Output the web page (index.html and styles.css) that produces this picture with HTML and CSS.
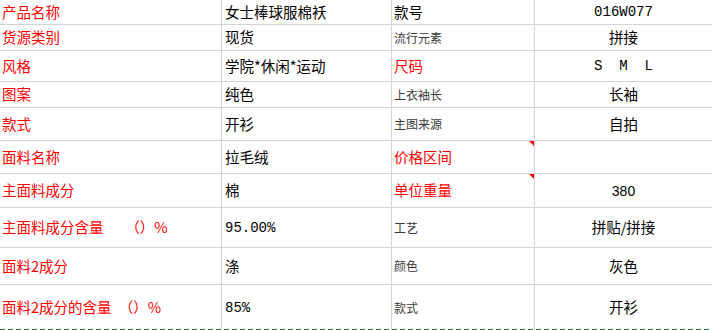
FILE: index.html
```html
<!DOCTYPE html>
<html lang="zh-CN">
<head>
<meta charset="utf-8">
<title>产品信息</title>
<link rel="stylesheet" href="styles.css">
</head>
<body>
<div class="sheet">
  <div class="row r1">
    <div class="cell k red">产品名称</div>
    <div class="cell v">女士棒球服棉袄</div>
    <div class="cell k2">款号</div>
    <div class="cell c mono">016W077</div>
  </div>
  <div class="row r2">
    <div class="cell k red">货源类别</div>
    <div class="cell v">现货</div>
    <div class="cell k2 small">流行元素</div>
    <div class="cell c">拼接</div>
  </div>
  <div class="row r3">
    <div class="cell k red">风格</div>
    <div class="cell v">学院*休闲*运动</div>
    <div class="cell k2 red">尺码</div>
    <div class="cell c mono">S&nbsp;&nbsp;M&nbsp;&nbsp;L</div>
  </div>
  <div class="row r4">
    <div class="cell k red">图案</div>
    <div class="cell v">纯色</div>
    <div class="cell k2 small">上衣袖长</div>
    <div class="cell c">长袖</div>
  </div>
  <div class="row r5">
    <div class="cell k red">款式</div>
    <div class="cell v">开衫</div>
    <div class="cell k2 small">主图来源</div>
    <div class="cell c">自拍</div>
  </div>
  <div class="row r6">
    <div class="cell k red">面料名称</div>
    <div class="cell v">拉毛绒</div>
    <div class="cell k2 red note">价格区间</div>
    <div class="cell c"></div>
  </div>
  <div class="row r7">
    <div class="cell k red">主面料成分</div>
    <div class="cell v">棉</div>
    <div class="cell k2 red note">单位重量</div>
    <div class="cell c sans">380</div>
  </div>
  <div class="row r8">
    <div class="cell k red">主面料成分含量　&ensp;（）%</div>
    <div class="cell v mono">95.00%</div>
    <div class="cell k2 small">工艺</div>
    <div class="cell c">拼贴/拼接</div>
  </div>
  <div class="row r9">
    <div class="cell k red">面料2成分</div>
    <div class="cell v">涤</div>
    <div class="cell k2 small">颜色</div>
    <div class="cell c">灰色</div>
  </div>
  <div class="row r10 last">
    <div class="cell k red">面料2成分的含量&ensp;（）%</div>
    <div class="cell v mono">85%</div>
    <div class="cell k2 small">款式</div>
    <div class="cell c">开衫</div>
  </div>
</div>
</body>
</html>
```
FILE: styles.css
```css
html, body {
  margin: 0;
  padding: 0;
  background: #ffffff;
}

body {
  font-family: "Noto Sans CJK SC", "Noto Sans", sans-serif;
  font-size: 14.5px;
  color: #000;
}

.sheet {
  width: 712px;
  display: flex;
  flex-direction: column;
}

.row {
  display: grid;
  grid-template-columns: 222px 170px 143px 177px;
}

.r1 { height: 25px; }
.r2 { height: 26px; }
.r3 { height: 31px; }
.r4 { height: 26px; }
.r5 { height: 33px; }
.r6 { height: 33px; }
.r7 { height: 34px; }
.r8 { height: 40px; }
.r9 { height: 37px; }
.r10 { height: 45px; }

.cell {
  box-sizing: border-box;
  display: flex;
  align-items: center;
  border-bottom: 1px solid #d4d4d4;
  border-right: 1px solid #d4d4d4;
  white-space: pre;
  line-height: 1;
  position: relative;
}

.cell:last-child {
  border-right: none;
}

.last .cell {
  border-bottom: none;
}

.last {
  background-image: repeating-linear-gradient(to right, #2f6f4a 0 5px, transparent 5px 8px);
  background-size: 100% 1px;
  background-position: left bottom;
  background-repeat: no-repeat;
}

.k { padding-left: 2px; }
.v { padding-left: 3px; }
.k2 { padding-left: 2px; }
.c { justify-content: center; }

.red { color: #ff0000; }

.small {
  font-size: 12px;
  color: #3a3a3a;
}

.mono {
  font-family: "Liberation Mono", "DejaVu Sans Mono", monospace;
  font-size: 14px;
}

.sans {
  font-family: "Liberation Sans", Arial, sans-serif;
  font-size: 14px;
}

.note::after {
  content: "";
  position: absolute;
  top: 0;
  right: 0;
  width: 0;
  height: 0;
  border-top: 5px solid #ff0000;
  border-left: 5px solid transparent;
}
```
